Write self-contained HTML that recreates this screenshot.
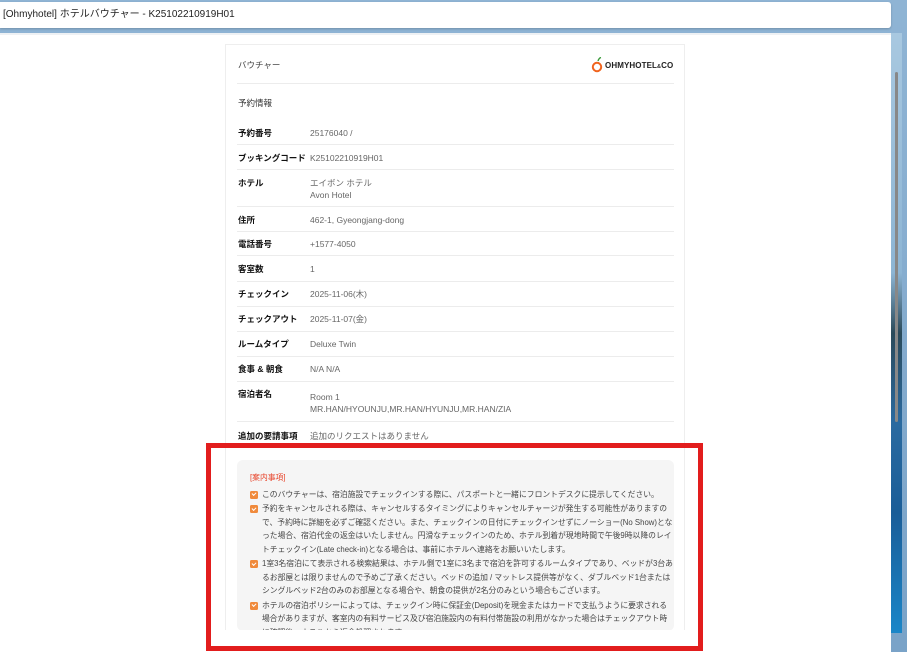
<!DOCTYPE html>
<html style="overflow:hidden;width:907px;height:652px"><head><meta charset="utf-8"><style>
*{margin:0;padding:0;box-sizing:border-box}
body{width:907px;height:652px;overflow:hidden;position:relative;background:linear-gradient(#8fb4d4,#7aa3c8);font-family:"Liberation Sans","Noto Sans CJK JP",sans-serif;}
.title{position:absolute;left:0;top:2px;width:891px;height:26px;background:#fff;border-radius:0 3px 3px 0;box-shadow:0 1px 2px rgba(0,0,0,.2);font-size:10px;color:#222;line-height:26px;padding-left:3px}
.page{position:absolute;left:0;top:33px;width:891px;height:619px;background:#fff;border-top:2px solid #eef1f4}
.strip{position:absolute;left:891px;top:33px;width:11px;height:600px;background:linear-gradient(#a8c8e0 0%,#8db5d4 40%,#2a4a5a 50%,#2a6aa0 65%,#1a5d98 80%,#1a86c8 100%)}
.sb{position:absolute;left:895px;top:72px;width:3px;height:350px;background:#888;border-radius:2px}
.card{position:absolute;left:225px;top:44px;width:460px;height:600px;border:1px solid #eee;border-bottom:none;overflow:hidden}
.t{position:absolute;font-size:8.5px;color:#555;white-space:nowrap;line-height:12px}
.l{left:12px;color:#111;font-weight:bold}
.v{left:84px;color:#666}
.hr{position:absolute;left:11px;width:437px;height:1px;background:#ececec}
.note{position:absolute;left:11px;top:415px;width:437px;height:171px;background:#f5f5f5;border-radius:6px;overflow:hidden}
.nt{position:absolute;left:13px;font-size:7.8px;color:#444;line-height:13.5px;width:424px}
.nt .i{position:relative;padding-left:12px;margin-bottom:1px}
.nt .i:before{content:"";position:absolute;left:0;top:3px;width:8px;height:8px;background:#f08a3c;border-radius:1.5px}
.nt .i:after{content:"";position:absolute;left:2px;top:4.5px;width:3px;height:2px;border-left:1.2px solid #fff;border-bottom:1.2px solid #fff;transform:rotate(-45deg)}
.red{position:absolute;left:206px;top:443px;width:497px;height:208px;border:5px solid #e21d1d}
</style></head><body>
<div class="title">[Ohmyhotel] ホテルバウチャー - K25102210919H01</div>
<div class="page"></div>
<div class="strip"></div><div class="sb"></div>
<div class="card">
<div class="t" style="left:12px;top:14px;color:#444">バウチャー</div>
<svg style="position:absolute;left:365px;top:12px" width="14" height="16" viewBox="0 0 14 16"><path d="M7 4 Q8 1 10 0.5" stroke="#3a9a3a" stroke-width="1.4" fill="none"/><circle cx="6" cy="10" r="4.2" stroke="#f0641e" stroke-width="2" fill="none"/></svg>
<div class="t" style="left:379px;top:15px;font-weight:bold;color:#222;font-size:8px;letter-spacing:.1px">OHMYHOTEL<span style="font-size:5.5px">&amp;</span>CO</div>
<div class="hr" style="top:38px"></div>
<div class="t" style="left:12px;top:52px;color:#333">予約情報</div>
<div class="t l" style="top:82px">予約番号</div><div class="t v" style="top:82px">25176040 /</div>
<div class="hr" style="top:99px"></div>
<div class="t l" style="top:107px">ブッキングコード</div><div class="t v" style="top:107px">K25102210919H01</div>
<div class="hr" style="top:124px"></div>
<div class="t l" style="top:132px">ホテル</div><div class="t v" style="top:132px">エイボン ホテル<br>Avon Hotel</div>
<div class="hr" style="top:161px"></div>
<div class="t l" style="top:169px">住所</div><div class="t v" style="top:169px">462-1, Gyeongjang-dong</div>
<div class="hr" style="top:186px"></div>
<div class="t l" style="top:193px">電話番号</div><div class="t v" style="top:193px">+1577-4050</div>
<div class="hr" style="top:210px"></div>
<div class="t l" style="top:218px">客室数</div><div class="t v" style="top:218px">1</div>
<div class="hr" style="top:236px"></div>
<div class="t l" style="top:243px">チェックイン</div><div class="t v" style="top:243px">2025-11-06(木)</div>
<div class="hr" style="top:261px"></div>
<div class="t l" style="top:268px">チェックアウト</div><div class="t v" style="top:268px">2025-11-07(金)</div>
<div class="hr" style="top:286px"></div>
<div class="t l" style="top:293px">ルームタイプ</div><div class="t v" style="top:293px">Deluxe Twin</div>
<div class="hr" style="top:311px"></div>
<div class="t l" style="top:318px">食事 &amp; 朝食</div><div class="t v" style="top:318px">N/A N/A</div>
<div class="hr" style="top:336px"></div>
<div class="t l" style="top:343px">宿泊者名</div><div class="t v" style="top:346px">Room 1<br>MR.HAN/HYOUNJU,MR.HAN/HYUNJU,MR.HAN/ZIA</div>
<div class="hr" style="top:376px"></div>
<div class="t l" style="top:385px">追加の要請事項</div><div class="t v" style="top:385px">追加のリクエストはありません</div>
<div class="note">
<div class="nt" style="top:11px">
<div style="color:#e8442a;margin-bottom:3px">[案内事項]</div>
<div class="i">このバウチャーは、宿泊施設でチェックインする際に、パスポートと一緒にフロントデスクに提示してください。</div>
<div class="i">予約をキャンセルされる際は、キャンセルするタイミングによりキャンセルチャージが発生する可能性がありますので、予約時に詳細を必ずご確認ください。また、チェックインの日付にチェックインせずにノーショー(No Show)となった場合、宿泊代金の返金はいたしません。円滑なチェックインのため、ホテル到着が現地時間で午後9時以降のレイトチェックイン(Late check-in)となる場合は、事前にホテルへ連絡をお願いいたします。</div>
<div class="i">1室3名宿泊にて表示される検索結果は、ホテル側で1室に3名まで宿泊を許可するルームタイプであり、ベッドが3台あるお部屋とは限りませんので予めご了承ください。ベッドの追加 / マットレス提供等がなく、ダブルベッド1台またはシングルベッド2台のみのお部屋となる場合や、朝食の提供が2名分のみという場合もございます。</div>
<div class="i">ホテルの宿泊ポリシーによっては、チェックイン時に保証金(Deposit)を現金またはカードで支払うように要求される場合がありますが、客室内の有料サービス及び宿泊施設内の有料付帯施設の利用がなかった場合はチェックアウト時に確認後、ホテルから返金処理されます。</div>
</div></div>
</div>
<div style="position:absolute;left:0;top:630px;width:891px;height:22px;background:#fff"></div>
<div class="red"></div>
</body></html>
